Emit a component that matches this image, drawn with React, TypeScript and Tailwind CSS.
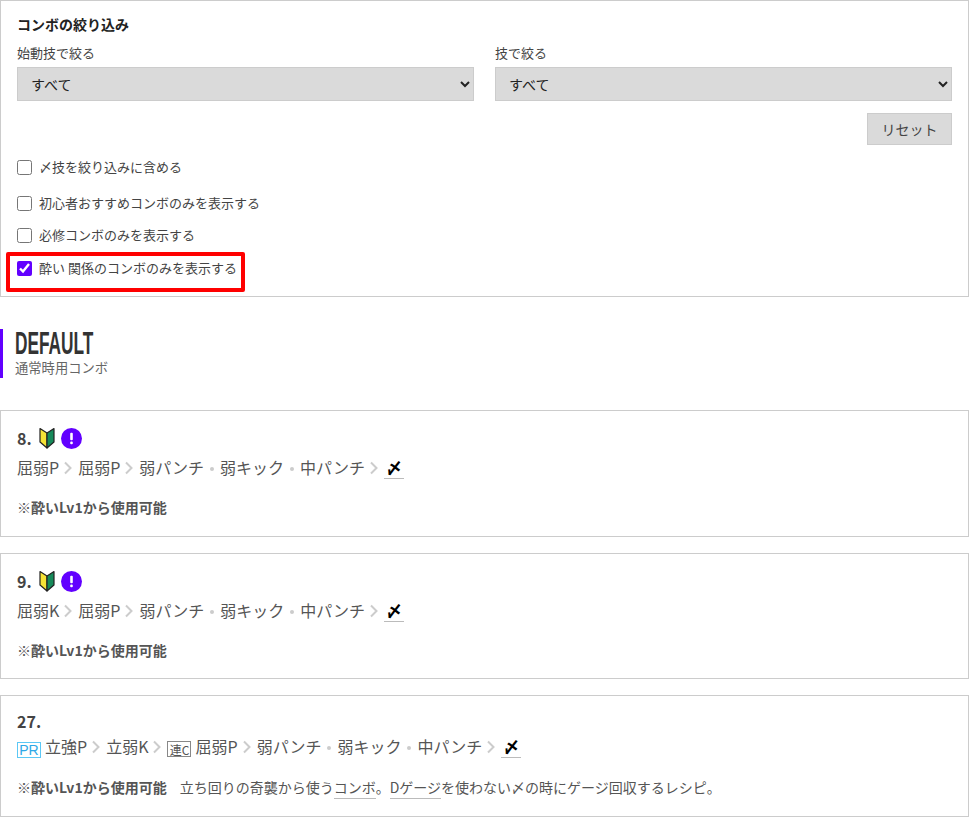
const jp = '"Noto Sans CJK JP", "Noto Sans", sans-serif';

function Chevron() {
  return (
    <svg width="10" height="14" viewBox="0 0 10 14" className="ml-[4px] mr-[5px] inline-block align-[-1px]">
      <path d="M2 1.5 L7.5 7 L2 12.5" fill="none" stroke="#ccc" strokeWidth="2" />
    </svg>
  );
}

function Dot() {
  return <span className="mx-[6px] inline-block h-[4px] w-[4px] rounded-full bg-[#ccc] align-[3px]" />;
}

function Shime() {
  return (
    <span className="inline-block w-[20px] border-b border-[#bbb] pb-[1px] text-center font-bold leading-[20px] text-black">
      〆
    </span>
  );
}

function Beginner() {
  return (
    <svg width="16" height="22" viewBox="0 0 16 22">
      <path d="M1 1.5 L8 6 L8 21 L1 15 Z" fill="#f5e236" stroke="#222" strokeWidth="1.2" strokeLinejoin="round" />
      <path d="M15 1.5 L8 6 L8 21 L15 15 Z" fill="#168a5a" stroke="#222" strokeWidth="1.2" strokeLinejoin="round" />
    </svg>
  );
}

function Alert() {
  return (
    <svg width="21" height="21" viewBox="0 0 21 21">
      <circle cx="10.5" cy="10.5" r="10.5" fill="#6200ff" />
      <rect x="9.2" y="4.8" width="2.6" height="7.4" rx="1" fill="#fff" />
      <rect x="9.2" y="13.6" width="2.6" height="2.6" rx="1" fill="#fff" />
    </svg>
  );
}

function Check({ label, checked, className }: { label: string; checked?: boolean; className: string }) {
  return (
    <label className={`flex items-center text-[13px] leading-[20px] text-[#444] ${className}`}>
      <input type="checkbox" defaultChecked={checked} className="m-0 mr-[7px] h-[15px] w-[15px] accent-[#6200ff]" />
      {label}
    </label>
  );
}

function Filter({ label }: { label: string }) {
  return (
    <div className="flex-1">
      <div className="text-[13px] leading-[20px] text-[#444]">{label}</div>
      <select className="mt-[4px] h-[34px] w-full border border-[#ccc] bg-[#dadada] pl-[9px] text-[14px] text-[#222]">
        <option>すべて</option>
      </select>
    </div>
  );
}

function Card({ no, first, className }: { no: string; first: string; className: string }) {
  return (
    <div className={`border border-[#ccc] px-[16px] pt-[15px] ${className}`}>
      <div className="flex h-[24px] items-center text-[16px] font-bold text-[#444]">
        {no}
        <span className="ml-[7px] flex"><Beginner /></span>
        <span className="ml-[6px] flex"><Alert /></span>
      </div>
      <div className="mt-[5px] text-[16px] leading-[24px] text-[#555]">
        {first}
        <Chevron />屈弱P
        <Chevron />弱パンチ
        <Dot />弱キック
        <Dot />中パンチ
        <Chevron />
        <Shime />
      </div>
      <div className="mt-[18px] text-[14px] font-bold leading-[20px] text-[#555]">※酔いLv1から使用可能</div>
    </div>
  );
}

export default function App() {
  return (
    <div style={{ fontFamily: jp }} className="bg-white">
      <div className="h-[297px] border border-[#ccc] px-[16px] pt-[13px]">
        <div className="text-[14px] font-bold leading-[20px] text-[#222]">コンボの絞り込み</div>
        <div className="mt-[9px] flex gap-[21px]">
          <Filter label="始動技で絞る" />
          <Filter label="技で絞る" />
        </div>
        <div className="mt-[12px] flex justify-end">
          <button className="h-[32px] w-[85px] border border-[#ccc] bg-[#dadada] text-[14px] text-[#444]">リセット</button>
        </div>
        <Check label="〆技を絞り込みに含める" className="mt-[12px]" />
        <Check label="初心者おすすめコンボのみを表示する" className="mt-[16px]" />
        <Check label="必修コンボのみを表示する" className="mt-[12px]" />
        <div className="relative">
          <Check label="酔い 関係のコンボのみを表示する" checked className="mt-[13px]" />
          <div className="absolute left-[-11px] top-[-6px] h-[40px] w-[239px] rounded-[2px] border-[4px] border-[#f00]" />
        </div>
      </div>

      <div className="mt-[32px] h-[49px] border-l-[3px] border-[#6200ff] pl-[12px]">
        <div className="h-[28px]">
          <span
            style={{ fontFamily: '"Liberation Sans", sans-serif' }}
            className="inline-block origin-left scale-x-[0.54] text-[32px] font-bold leading-[28px] text-[#333]"
          >
            DEFAULT
          </span>
        </div>
        <div className="mt-[4px] text-[13.3px] leading-[14px] text-[#666]">通常時用コンボ</div>
      </div>

      <div className="mt-[32px]">
        <Card no="8." first="屈弱P" className="mb-[16px] h-[127px]" />
        <Card no="9." first="屈弱K" className="mb-[16px] h-[126px]" />
        <div className="h-[122px] border border-[#ccc] px-[16px] pt-[15px]">
          <div className="h-[20px] text-[16px] font-bold leading-[20px] text-[#444]">27.</div>
          <div className="mt-[3px] text-[16px] leading-[24px] text-[#555]">
            <span
              style={{ fontFamily: '"Liberation Sans", sans-serif' }}
              className="mr-[4px] inline-block h-[16px] w-[24px] border border-[#5cc8f5] text-center align-[-2px] text-[14px] leading-[15px] text-[#2ea8e6]"
            >
              PR
            </span>
            立強P
            <Chevron />立弱K
            <Chevron />
            <span className="mr-[4px] inline-block h-[16px] w-[24px] border border-[#888] text-center align-[-2px] text-[12px] leading-[15px] text-[#555]">連C</span>
            屈弱P
            <Chevron />弱パンチ
            <Dot />弱キック
            <Dot />中パンチ
            <Chevron />
            <Shime />
          </div>
          <div className="mt-[19px] text-[14px] leading-[20px] text-[#555]">
            <span className="font-bold">※酔いLv1から使用可能</span>
            <span className="ml-[13px]">立ち回りの奇襲から使う</span>
            <span className="border-b border-[#bbb] pb-[1px]">コンボ</span>。
            <span className="border-b border-[#bbb] pb-[1px]">Dゲージ</span>
            を使わない〆の時にゲージ回収するレシピ。
          </div>
        </div>
      </div>
    </div>
  );
}
